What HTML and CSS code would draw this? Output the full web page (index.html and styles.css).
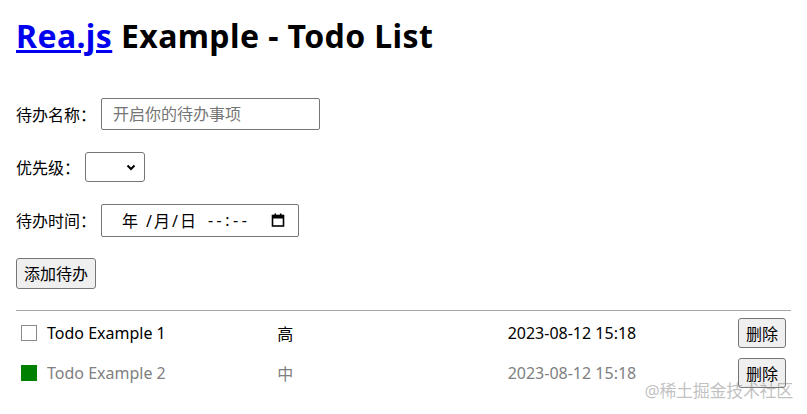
FILE: index.html
```html
<!DOCTYPE html>
<html lang="zh-CN">
<head>
    <meta charset="UTF-8">
    <meta name="viewport" content="width=device-width, initial-scale=1.0">
    <title>Rea.js Example - Todo List</title>
    <link rel="stylesheet" href="styles.css">
</head>
<body>
<div class="app">
    <h1><a href="#">Rea.js</a> Example - Todo List</h1>

    <form class="todo-form">
        <div class="form-row">
            <label for="todo-name">待办名称：</label>
            <input type="text" id="todo-name" class="field name-field" placeholder="开启你的待办事项">
        </div>
        <div class="form-row">
            <label for="todo-priority">优先级：</label>
            <span class="select-wrap">
                <select id="todo-priority" class="field select-field">
                    <option value=""></option>
                    <option value="high">高</option>
                    <option value="mid">中</option>
                    <option value="low">低</option>
                </select>
                <svg class="chevron" width="10" height="7" viewBox="0 0 10 7">
                    <path d="M1.5 1.5 L5 5 L8.5 1.5" fill="none" stroke="#000" stroke-width="2"/>
                </svg>
            </span>
        </div>
        <div class="form-row">
            <label for="todo-time">待办时间：</label>
            <div class="field date-field" id="todo-time">
                <span class="date-part">年</span>
                <span class="date-part day-part">/月/日</span>
                <span class="date-part time-part">--:--</span>
                <svg class="calendar" width="14" height="14" viewBox="0 0 14 14">
                    <rect x="1.5" y="2.5" width="11" height="10.5" fill="none" stroke="#000" stroke-width="1.6"/>
                    <rect x="1.5" y="2.5" width="11" height="3" fill="#000"/>
                    <rect x="3.5" y="0.5" width="1.6" height="2.5" fill="#000"/>
                    <rect x="8.9" y="0.5" width="1.6" height="2.5" fill="#000"/>
                </svg>
            </div>
        </div>
        <div class="form-row">
            <button type="button" class="btn">添加待办</button>
        </div>
    </form>

    <hr class="divider">

    <ul class="todo-list">
        <li class="todo-item">
            <input type="checkbox" class="check">
            <span class="col">Todo Example 1</span>
            <span class="col">高</span>
            <span class="col">2023-08-12 15:18</span>
            <button type="button" class="btn">删除</button>
        </li>
        <li class="todo-item done">
            <input type="checkbox" class="check" checked>
            <span class="col">Todo Example 2</span>
            <span class="col">中</span>
            <span class="col">2023-08-12 15:18</span>
            <button type="button" class="btn">删除</button>
        </li>
    </ul>
</div>
<div class="watermark">@稀土掘金技术社区</div>
</body>
</html>
```

FILE: styles.css
```css
body {
    font-family: "Noto Sans", "Noto Sans CJK SC", sans-serif;
    font-size: 16px;
    color: #000;
    margin: 0;
    background: #fff;
    overflow: hidden;
}

.app {
    padding: 0 16px;
}

h1 {
    font-size: 32px;
    font-weight: bold;
    margin: 14px 0 0;
    line-height: 44px;
    letter-spacing: 0.4px;
}

h1 a {
    color: #0000ee;
}

.todo-form {
    margin-top: 40px;
    display: flex;
    flex-direction: column;
    gap: 21px;
}

.form-row {
    display: flex;
    align-items: center;
    gap: 5px;
    height: 32px;
}

.form-row label {
    white-space: nowrap;
}

.field {
    box-sizing: border-box;
    border: 1px solid #767676;
    border-radius: 2px;
    background: #fff;
    font-family: inherit;
    font-size: 16px;
}

.name-field {
    width: 219px;
    height: 32px;
    padding: 0 11px;
}

.name-field::placeholder {
    color: #757575;
}

.select-wrap {
    position: relative;
    display: inline-flex;
}

.select-field {
    appearance: none;
    width: 60px;
    height: 30px;
    border-radius: 3px;
}

.chevron {
    position: absolute;
    right: 9px;
    top: 12px;
    pointer-events: none;
}

.date-field {
    width: 198px;
    height: 33px;
    display: flex;
    align-items: center;
    padding: 0 13px 0 20px;
}

.date-part {
    margin-right: 8px;
}

.day-part {
    letter-spacing: 2px;
    margin-right: 10px;
}

.time-part {
    letter-spacing: 3.5px;
}

.calendar {
    margin-left: auto;
}

.btn {
    font-family: inherit;
    font-size: 16px;
    background: #efefef;
    border: 1px solid #767676;
    border-radius: 3px;
    padding: 0 7px;
    height: 31px;
    color: #000;
}

.divider {
    border: 0;
    border-top: 1px solid #a8a8a8;
    margin: 21px 0 0;
}

.todo-list {
    list-style: none;
    margin: 0;
    padding: 0;
}

.todo-item {
    display: flex;
    align-items: center;
    height: 30px;
    padding: 7px 5px 3px;
}

.todo-item .btn {
    height: 30px;
}

.check {
    appearance: none;
    width: 16px;
    height: 16px;
    margin: 0 10px 0 0;
    border: 1px solid #8a8a8a;
    background: #fff;
}

.check:checked {
    background: #008000;
    border-color: #008000;
}

.col {
    flex: 1;
}

.done .col {
    color: #808080;
}

.watermark {
    position: absolute;
    right: 14px;
    bottom: 12px;
    font-size: 17px;
    color: rgba(140, 140, 140, 0.55);
    letter-spacing: -0.3px;
}
```
